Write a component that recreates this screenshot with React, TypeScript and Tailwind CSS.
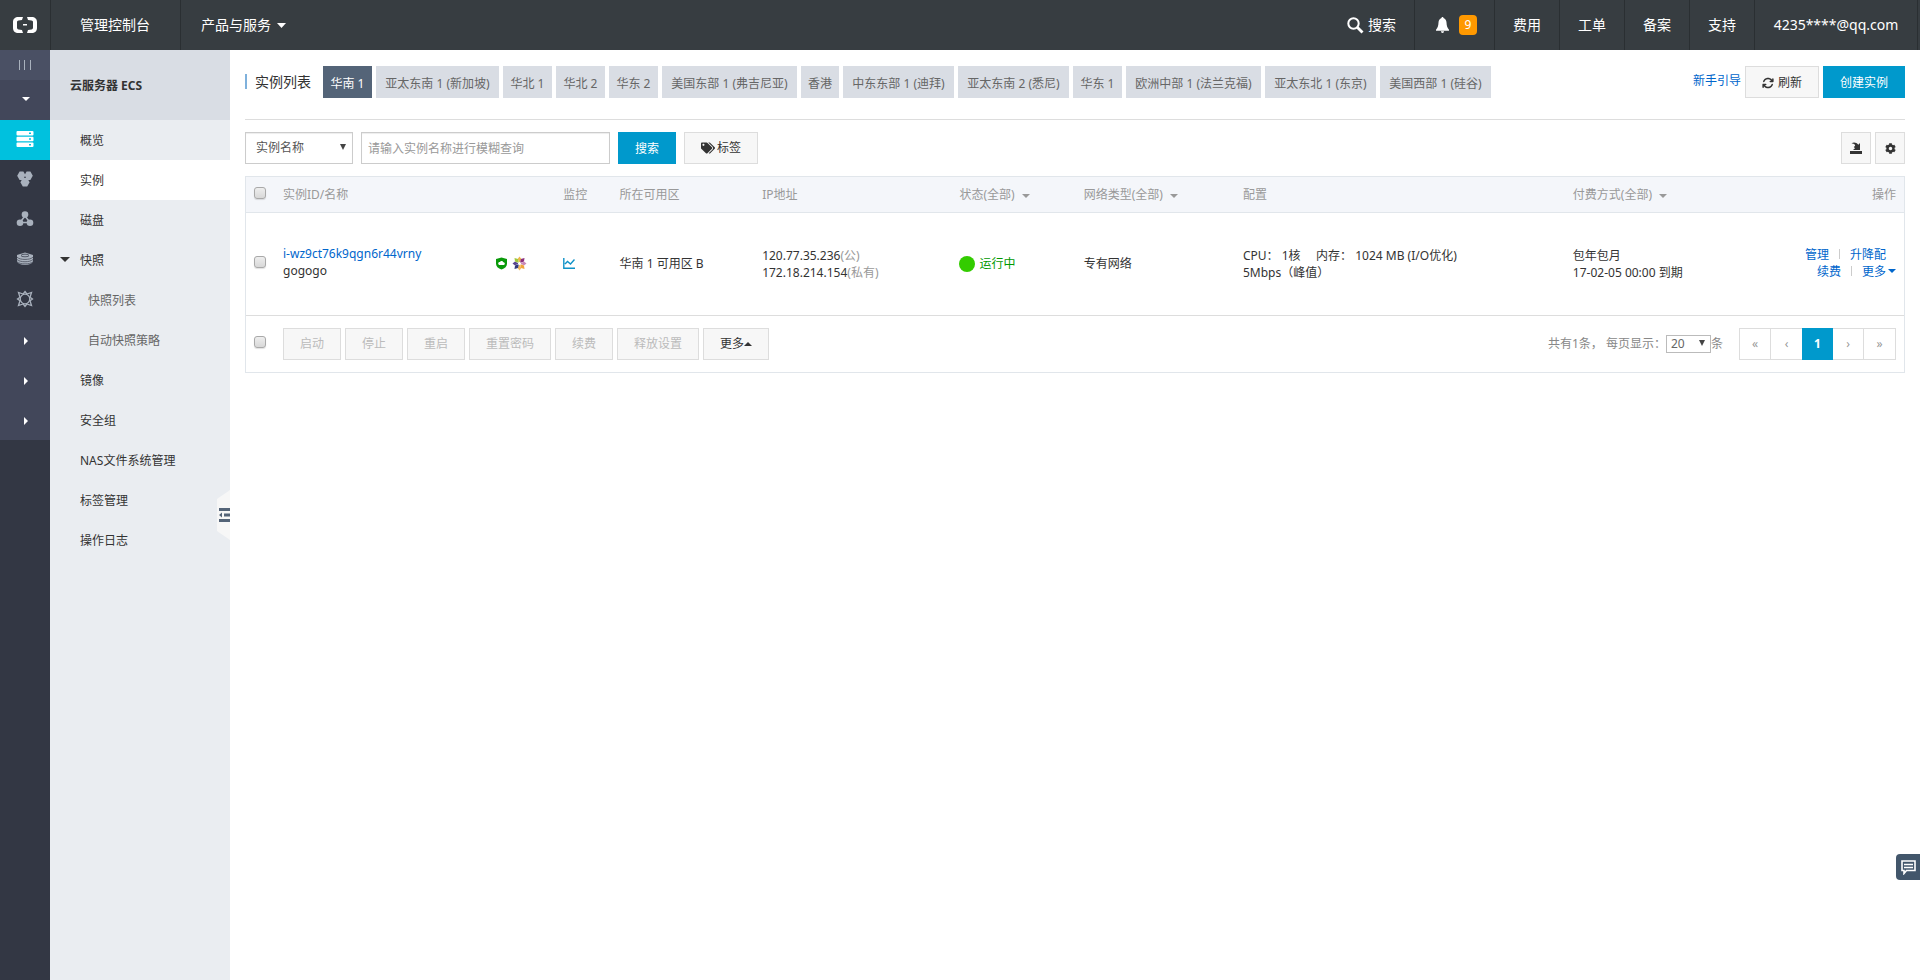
import React from "react";
import { FaTags, FaCog } from "react-icons/fa";
import { FaArrowsRotate } from "react-icons/fa6";

const regions = [
  { name: "华南 1", width: "min-w-[49px]" },
  { name: "亚太东南 1 (新加坡)", width: "min-w-[123px]" },
  { name: "华北 1", width: "min-w-[49px]" },
  { name: "华北 2", width: "min-w-[49px]" },
  { name: "华东 2", width: "min-w-[49px]" },
  { name: "美国东部 1 (弗吉尼亚)", width: "min-w-[135px]" },
  { name: "香港", width: "min-w-[38px]" },
  { name: "中东东部 1 (迪拜)", width: "min-w-[111px]" },
  { name: "亚太东南 2 (悉尼)", width: "min-w-[111px]" },
  { name: "华东 1", width: "min-w-[49px]" },
  { name: "欧洲中部 1 (法兰克福)", width: "min-w-[135px]" },
  { name: "亚太东北 1 (东京)", width: "min-w-[111px]" },
  { name: "美国西部 1 (硅谷)", width: "min-w-[111px]" },
];

const navItems = [
  { name: "概览" },
  { name: "实例", active: true },
  { name: "磁盘" },
  { name: "快照", open: true },
  { name: "快照列表", sub: true },
  { name: "自动快照策略", sub: true },
  { name: "镜像" },
  { name: "安全组" },
  { name: "NAS文件系统管理" },
  { name: "标签管理" },
  { name: "操作日志" },
];

const bulkActions = ["启动", "停止", "重启", "重置密码", "续费", "释放设置"];

function Caret({ className = "" }: { className?: string }) {
  return (
    <svg viewBox="0 0 8 4" className={`inline-block h-1 w-2 fill-current ${className}`} aria-hidden="true">
      <path d="M0 0h8L4 4z" />
    </svg>
  );
}

function Logo() {
  return (
    <svg width="24" height="16" viewBox="0 0 24 16" fill="#fff" aria-hidden="true">
      <path d="M10 0H5.500C2 0 0 2 0 5v6c0 3 2 5 5.500 5H10l-1-3-3.500-.6C4.500 12.200 4 11.700 4 10.800V5.200c0-.9.5-1.400 1.500-1.600L9 3z" />
      <path d="M14 0h4.500C22 0 24 2 24 5v6c0 3-2 5-5.500 5H14l1-3 3.500-.6c1-.2 1.500-.7 1.500-1.600V5.200c0-.9-.5-1.400-1.500-1.600L15 3z" />
      <path d="M10 7h4v1.500h-4z" />
    </svg>
  );
}

function ServerIcon() {
  return (
    <svg width="18" height="18" viewBox="0 0 18 18" aria-hidden="true">
      <rect x="0.500" y="1" width="17" height="4.600" rx="1" fill="#fff" />
      <rect x="0.500" y="6.700" width="17" height="4.600" rx="1" fill="#fff" />
      <rect x="0.500" y="12.400" width="17" height="4.600" rx="1" fill="#fff" />
      <path d="M13 3.300h2M13 9h2M13 14.700h2" stroke="#00c1de" strokeWidth="1.400" />
    </svg>
  );
}

function ClusterIcon() {
  return (
    <svg width="18" height="18" viewBox="0 0 18 18" fill="#a9b1bd" aria-hidden="true">
      <path d="M3.600 1.500h3.800l2 3.400v1.600l-2 3.400H3.600l-2.400-4.200z" />
      <path d="M14.400 1.500h-3.800l-2 3.400v1.600l2 3.400h3.800l2.400-4.200z" />
      <path d="M6.800 8h4.400l2.400 4.200-2.400 4.300H6.800l-2.400-4.300z" />
      <circle cx="9" cy="7.300" r=".8" fill="#333744" />
    </svg>
  );
}

function NodesIcon() {
  return (
    <svg width="18" height="18" viewBox="0 0 18 18" aria-hidden="true">
      <path d="M9 6 4 12.500h10z" fill="none" stroke="#a9b1bd" strokeWidth="1.600" />
      <circle cx="9" cy="4.500" r="3.300" fill="#a9b1bd" />
      <circle cx="4" cy="12.700" r="3.300" fill="#a9b1bd" />
      <circle cx="14" cy="12.700" r="3.300" fill="#a9b1bd" />
    </svg>
  );
}

function LayersIcon() {
  return (
    <svg width="18" height="18" viewBox="0 0 18 18" aria-hidden="true">
      <path d="M9 2.500 17 5v6.500c-1 2-4 3.500-8 3.500s-7-1.500-8-3.500V5z" fill="#a9b1bd" />
      <path d="M1 7.200c3 3 13 3 16 0M1 9.500c3 3 13 3 16 0M1 11.800c3 2.800 13 2.800 16 0" fill="none" stroke="#4a4f5d" strokeWidth=".8" />
      <ellipse cx="9" cy="5.500" rx="4" ry="1.300" fill="none" stroke="#4a4f5d" strokeWidth=".9" />
    </svg>
  );
}

function SunIcon() {
  return (
    <svg width="18" height="18" viewBox="0 0 18 18" fill="none" stroke="#a9b1bd" strokeWidth="1.300" aria-hidden="true">
      <circle cx="9" cy="9" r="4.800" />
      <path d="M9 1.500 10.800 4 15.500 2.500 14 7.200 16.500 9 14 10.800l1.500 4.700-4.700-1.500L9 16.500 7.200 14l-4.700 1.500L4 10.800 1.500 9 4 7.200 2.500 2.500 7.200 4z" />
    </svg>
  );
}

function TopItem({ children, className = "" }: { children: React.ReactNode; className?: string }) {
  return (
    <a href="#" className={`flex h-full items-center border-r border-[#2a2f32] ${className}`}>
      {children}
    </a>
  );
}

function Tick({ label }: { label: string }) {
  return (
    <input
      type="checkbox"
      aria-label={label}
      className="relative -top-0.5 block size-3 appearance-none rounded-[3px] border border-[#a9a9a9] bg-linear-to-b from-[#eeeeee] to-[#d8d8d8] shadow-[0_1px_1px_rgba(0,0,0,0.12)]"
    />
  );
}

const buttonBase = "flex h-8 items-center justify-center border border-[#dddddd] bg-[#f7f7f7]";

export default function App() {
  return (
    <div className="flex min-h-screen flex-col bg-white font-['Noto_Sans','Noto_Sans_CJK_SC',sans-serif] text-xs text-[#333333]">
      <header className="flex h-[50px] items-center bg-[#373d41] text-sm text-white">
        <TopItem className="w-[51px] justify-center">
          <Logo />
        </TopItem>
        <TopItem className="w-[130px] pl-[29px]">管理控制台</TopItem>
        <button type="button" className="flex items-center gap-1.5 pl-5">
          产品与服务
          <svg viewBox="0 0 9 5" className="h-[5px] w-[9px] fill-current" aria-hidden="true">
            <path d="M0 0h9L4.500 5z" />
          </svg>
        </button>
        <nav className="ml-auto flex h-full pr-0.5">
          <TopItem className="gap-1 pr-[18px]">
            <svg width="17" height="17" viewBox="0 0 17 17" fill="none" stroke="#fff" aria-hidden="true">
              <circle cx="6.500" cy="6.500" r="5.200" strokeWidth="2" />
              <path d="m10.500 10.500 5 5" strokeWidth="2.800" />
            </svg>
            搜索
          </TopItem>
          <TopItem className="w-20 justify-between pr-[17px] pl-5">
            <svg width="15" height="18" viewBox="0 0 15 18" fill="#fff" aria-hidden="true">
              <path d="M7.500 1c.7 0 1 .5 1 1.100 1.900.6 2.900 2.300 3 4.500.1 3.400.9 5.600 2.500 7.100v1.100H1v-1.100c1.600-1.500 2.400-3.700 2.500-7.100.1-2.200 1.100-3.900 3-4.500 0-.6.3-1.100 1-1.100zM6 15.300h3c0 1-.6 1.700-1.500 1.700S6 16.300 6 15.300z" />
            </svg>
            <span className="flex h-5 w-[18px] items-center justify-center rounded bg-[#ff9900] text-xs">9</span>
          </TopItem>
          <TopItem className="px-[18px]">费用</TopItem>
          <TopItem className="px-[18px]">工单</TopItem>
          <TopItem className="px-[18px]">备案</TopItem>
          <TopItem className="px-[18px]">支持</TopItem>
          <TopItem className="min-w-[163px] justify-center">4235****@qq.com</TopItem>
        </nav>
      </header>

      <div className="flex flex-1">
        <aside className="flex w-[50px] shrink-0 flex-col bg-[#333744] text-white">
          <button type="button" aria-label="展开导航" className="flex h-[30px] items-center justify-center bg-[#4a5064]">
            <svg width="12" height="10" viewBox="0 0 12 10" stroke="#a9b1bd" aria-hidden="true">
              <path d="M.5 0v10M5.500 0v10M11.500 0v10" />
            </svg>
          </button>
          <button type="button" aria-label="产品" className="flex h-10 items-center justify-center bg-[#42475a] pb-0.5 pl-0.5">
            <Caret />
          </button>
          <a href="#" aria-label="云服务器" className="flex h-10 items-center justify-center bg-[#00c1de] pb-0.5"><ServerIcon /></a>
          <a href="#" aria-label="负载均衡" className="flex h-10 items-center justify-center pb-0.5"><ClusterIcon /></a>
          <a href="#" aria-label="网络" className="flex h-10 items-center justify-center pb-0.5"><NodesIcon /></a>
          <a href="#" aria-label="存储" className="flex h-10 items-center justify-center pb-0.5"><LayersIcon /></a>
          <a href="#" aria-label="监控" className="flex h-10 items-center justify-center pb-0.5"><SunIcon /></a>
          {["分组一", "分组二", "分组三"].map((group) => (
            <button key={group} type="button" aria-label={group} className="flex h-10 items-center justify-center bg-[#42475a] pt-0.5 pl-0.5">
              <svg width="4" height="8" viewBox="0 0 4 8" fill="#fff" aria-hidden="true"><path d="M0 0v8l4-4z" /></svg>
            </button>
          ))}
        </aside>

        <nav className="relative w-[180px] shrink-0 bg-[#eaedf1]">
          <h2 className="flex h-[70px] items-center bg-[#d9dde4] pt-0.5 pl-5 font-bold">云服务器 ECS</h2>
          {navItems.map((item) => (
            <a
              key={item.name}
              href="#"
              className={`flex h-10 items-center pt-0.5 ${item.active ? "bg-white" : ""} ${item.sub ? "pl-[38px] text-[#666666]" : item.open ? "pl-2.5" : "pl-[30px]"}`}
            >
              {item.open && (
                <svg viewBox="0 0 10 5" className="mr-2.5 mb-1 h-[5px] w-2.5 fill-current" aria-hidden="true"><path d="M0 0h10L5 5z" /></svg>
              )}
              {item.name}
            </a>
          ))}
          <button type="button" aria-label="收起" className="absolute top-[440px] right-0 h-[50px] w-[13px]">
            <svg width="13" height="50" viewBox="0 0 13 50" aria-hidden="true">
              <path d="M13 0v50L0 41V9z" fill="#f7f7f7" />
              <path d="M2 18h11v3H2zM7 23.500h6v3H7zM2 29h11v3H2zM2 25l3-2.500v5z" fill="#546478" />
            </svg>
          </button>
        </nav>

        <main className="min-w-0 flex-1 px-[15px]">
          <div className="flex h-[70px] items-center border-b border-[#dddddd] pb-1.5">
            <h1 className="mr-3 flex shrink-0 items-center text-sm">
              <span className="mr-2 h-[15px] w-0.5 bg-[#7fb1dc]" />
              实例列表
            </h1>
            <div className="flex gap-1">
              {regions.map((region, i) => (
                <button
                  key={region.name}
                  type="button"
                  className={`h-8 pt-1 whitespace-nowrap ${region.width} ${i === 0 ? "bg-[#546478] text-white" : "bg-[#d9dde4] text-[#666666]"}`}
                >
                  {region.name}
                </button>
              ))}
            </div>
            <div className="ml-auto flex shrink-0 gap-1">
              <a href="#" className="pt-[7px] text-[#0066cc]">新手引导</a>
              <button type="button" className={`${buttonBase} w-[74px] gap-1 pt-0.5`}>
                <FaArrowsRotate className="size-3" />
                刷新
              </button>
              <button type="button" className="h-8 w-[82px] bg-[#0099cc] pt-0.5 text-white">创建实例</button>
            </div>
          </div>

          <div className="flex py-3">
            <div className="relative">
              <select aria-label="查询条件" className="block h-8 w-[108px] appearance-none border border-[#cccccc] bg-white pl-2.5 text-[#555555] shadow-[inset_0_1px_1px_rgba(0,0,0,0.075)]">
                <option>实例名称</option>
              </select>
              <svg width="6" height="6" viewBox="0 0 6 6" className="pointer-events-none absolute top-3 right-[7px] fill-[#444444]" aria-hidden="true"><path d="M0 0h6L3 6z" /></svg>
            </div>
            <input
              type="text"
              aria-label="实例名称"
              placeholder="请输入实例名称进行模糊查询"
              className="ml-2 h-8 w-[249px] border border-[#cccccc] px-1.5 shadow-[inset_0_1px_1px_rgba(0,0,0,0.075)] placeholder:text-[#999999]"
            />
            <button type="button" className="ml-2 h-8 w-[58px] bg-[#0099cc] pt-0.5 text-white">搜索</button>
            <button type="button" className={`${buttonBase} ml-2 w-[74px] gap-0.5`}>
              <FaTags className="size-3.5" />
              标签
            </button>
            <div className="ml-auto flex gap-1">
              <button type="button" aria-label="导出" className={`${buttonBase} w-[30px]`}>
                <svg width="12" height="12" viewBox="0 0 12 12" fill="#333" aria-hidden="true">
                  <path d="M0 9h12v3H0zM3 8h7V1L8.300 2.700C6.500.5 3.500-.2 1.500 1.500c2-.3 3.300.6 3.700 2.200L3.800 5 5 6.200z" />
                </svg>
              </button>
              <button type="button" aria-label="设置" className={`${buttonBase} w-[30px]`}>
                <FaCog className="size-[11px]" />
              </button>
            </div>
          </div>

          <section className="border border-[#e1e6eb]">
            <table className="w-full table-fixed text-left">
              <colgroup>
                <col className="w-[29px]" />
                <col className="w-[16.9%]" />
                <col className="w-[3.4%]" />
                <col className="w-[8.6%]" />
                <col className="w-[11.9%]" />
                <col className="w-[7.5%]" />
                <col className="w-[9.6%]" />
                <col className="w-[19.9%]" />
                <col className="w-[9.6%]" />
                <col />
              </colgroup>
              <thead className="bg-[#f4f6fa] text-[#999999]">
                <tr className="h-[35px] border-b border-[#e1e6eb] whitespace-nowrap [&>th]:px-2 [&>th]:pt-0.5 [&>th]:font-normal">
                  <th><Tick label="全选" /></th>
                  <th>实例ID/名称</th>
                  <th>监控</th>
                  <th>所在可用区</th>
                  <th>IP地址</th>
                  <th>状态(全部) <Caret className="ml-1" /></th>
                  <th>网络类型(全部) <Caret className="ml-1" /></th>
                  <th>配置</th>
                  <th>付费方式(全部) <Caret className="ml-1" /></th>
                  <th className="text-right">操作</th>
                </tr>
              </thead>
              <tbody>
                <tr className="h-[103px] border-b border-[#dddddd] leading-[17px] [&>td]:px-2">
                  <td><Tick label="选择实例 gogogo" /></td>
                  <td>
                    <div className="flex items-center justify-between pr-5">
                      <div className="pb-1">
                        <a href="#" className="text-[#0066cc]">i-wz9ct76k9qgn6r44vrny</a>
                        <br />
                        gogogo
                      </div>
                      <div className="flex items-center gap-1">
                        <svg width="13" height="13" viewBox="0 0 13 13" aria-hidden="true">
                          <path d="M6.500.5 12 2v4.500c0 3-2 5-5.500 6-3.500-1-5.500-3-5.500-6V2z" fill="#0a9a0a" />
                          <path d="M3.200 6.500c0-1.200 1-1.700 1.700-1.500.8-1.500 3-1.200 3.300.3 1 0 1.600.6 1.600 1.400S9 8 8.300 8H4.800c-1 0-1.600-.7-1.600-1.500z" fill="#fff" />
                        </svg>
                        <svg width="15" height="15" viewBox="0 0 15 15" aria-hidden="true">
                          <path d="M7.500 6.800 5.600 3 7.500.5 9.400 3z" fill="#f0b64a" />
                          <path d="M8 7 8.800 3l3.700-1L12 5.500z" fill="#8b2f7c" />
                          <path d="M8.200 7.500 12 5.600l2.500 1.900L12 9.400z" fill="#c98ab8" />
                          <path d="m8 8 4 1.500.5 3.500-3.500-1z" fill="#f0a43c" />
                          <path d="m7.500 8.200 1.900 3.800-1.900 2.500L5.600 12z" fill="#f3b95b" />
                          <path d="M7 8 6 12l-3.500 1L3 9.500z" fill="#333a7c" />
                          <path d="M6.800 7.500 3 9.400.5 7.500 3 5.600z" fill="#5a4690" />
                          <path d="M7 7 3 5.500 2.500 2 6 3z" fill="#a0c83c" />
                          <circle cx="7.500" cy="7.500" r="1.500" fill="#fff" />
                        </svg>
                      </div>
                    </div>
                  </td>
                  <td>
                    <svg width="12" height="11" viewBox="0 0 12 11" fill="none" stroke="#0f92c8" strokeWidth="1.400" aria-hidden="true">
                      <path d="M.8 0v10.200H12M2 6l2.500-2.500L7.500 6 11.500 1.500" />
                    </svg>
                  </td>
                  <td>华南 1 可用区 B</td>
                  <td>
                    120.77.35.236<span className="text-[#999999]">(公)</span>
                    <br />
                    172.18.214.154<span className="text-[#999999]">(私有)</span>
                  </td>
                  <td>
                    <span className="flex items-center gap-1 text-[#009900]">
                      <span className="size-4 rounded-full bg-[#33cc00]" />
                      运行中
                    </span>
                  </td>
                  <td>专有网络</td>
                  <td>
                    CPU： 1核 &nbsp;&nbsp;&nbsp; 内存： 1024 MB (I/O优化)
                    <br />
                    5Mbps（峰值）
                  </td>
                  <td>
                    包年包月
                    <br />
                    17-02-05 00:00 到期
                  </td>
                  <td className="text-[#0066cc]">
                    <div className="flex flex-col items-end pb-0.5">
                      <div className="flex items-center pr-2.5">
                        <a href="#">管理</a>
                        <span className="mx-2.5 h-2.5 w-px bg-[#cccccc]" />
                        <a href="#">升降配</a>
                      </div>
                      <div className="flex items-center">
                        <a href="#">续费</a>
                        <span className="mx-2.5 h-2.5 w-px bg-[#cccccc]" />
                        <button type="button" className="flex items-center gap-0.5">
                          更多
                          <Caret />
                        </button>
                      </div>
                    </div>
                  </td>
                </tr>
              </tbody>
            </table>

            <div className="flex h-14 items-center px-2">
              <div className="mr-[17px]"><Tick label="全选本页" /></div>
              <div className="flex gap-1">
                {bulkActions.map((action) => (
                  <button key={action} type="button" disabled className={`${buttonBase} px-4 text-[#bbbbbb]`}>
                    {action}
                  </button>
                ))}
                <button type="button" className={`${buttonBase} px-4`}>
                  更多
                  <svg width="8" height="4" viewBox="0 0 8 4" className="fill-current" aria-hidden="true"><path d="M0 4h8L4 0z" /></svg>
                </button>
              </div>
              <div className="ml-auto flex items-center text-[#888888]">
                <label htmlFor="page-size">共有1条， 每页显示：</label>
                <div className="relative">
                  <select id="page-size" className="block h-[18px] w-[45px] appearance-none border border-[#bbbbbb] bg-white pl-1 leading-4 text-[#666666]">
                    <option>20</option>
                  </select>
                  <svg width="6" height="6" viewBox="0 0 6 6" className="pointer-events-none absolute top-[5px] right-1.5 fill-[#444444]" aria-hidden="true"><path d="M0 0h6L3 6z" /></svg>
                </div>
                条
              </div>
              <div className="ml-4 flex h-8 border border-[#dddddd] text-[#999999] [&>button]:w-[31px]">
                <button type="button" className="border-r border-[#dddddd]">«</button>
                <button type="button">‹</button>
                <button type="button" className="-my-px bg-[#0099cc] font-bold text-white">1</button>
                <button type="button" className="border-r border-[#dddddd]">›</button>
                <button type="button">»</button>
              </div>
            </div>
          </section>
        </main>
      </div>

      <button type="button" aria-label="咨询" className="fixed right-0 bottom-[100px] flex h-[26px] w-6 items-center justify-center rounded-l bg-[#42566b]">
        <svg width="17" height="15" viewBox="0 0 17 15" aria-hidden="true">
          <path d="M2 1h13v9.500H6.500L4 13.500v-3H2z" fill="none" stroke="#fff" strokeWidth="1.600" />
          <path d="M4 4.500h9M4 7.500h9" stroke="#fff" strokeWidth="1.500" />
        </svg>
      </button>
    </div>
  );
}
